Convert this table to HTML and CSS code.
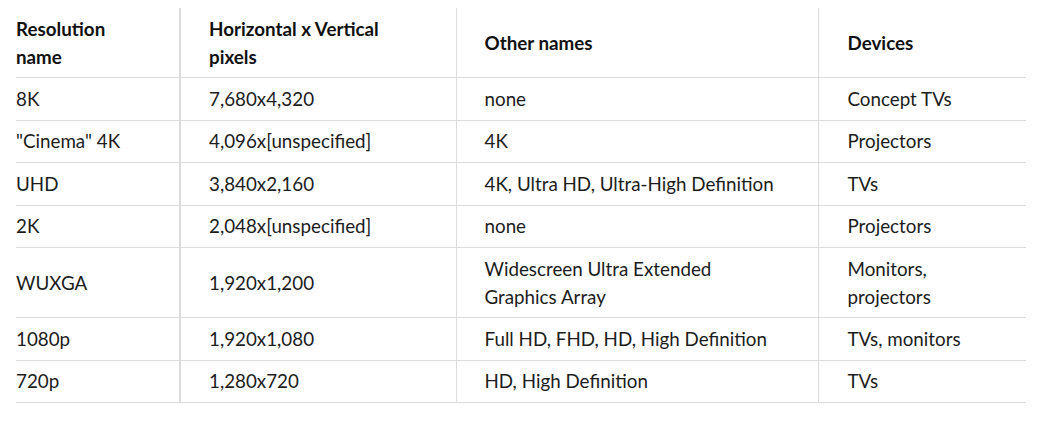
FILE: index.html
```html
<!DOCTYPE html>
<html lang="en">
<head>
<meta charset="utf-8">
<title>Resolutions</title>
<link rel="stylesheet" href="styles.css">
</head>
<body>
<div class="wrap">
<table class="res-table">
  <colgroup>
    <col class="c1"><col class="c2"><col class="c3"><col class="c4">
  </colgroup>
  <thead>
    <tr>
      <th>Resolution name</th>
      <th>Horizontal x Vertical pixels</th>
      <th>Other names</th>
      <th>Devices</th>
    </tr>
  </thead>
  <tbody>
    <tr><td>8K</td><td>7,680x4,320</td><td>none</td><td>Concept TVs</td></tr>
    <tr><td>"Cinema" 4K</td><td>4,096x[unspecified]</td><td>4K</td><td>Projectors</td></tr>
    <tr><td>UHD</td><td>3,840x2,160</td><td>4K, Ultra HD, Ultra-High Definition</td><td>TVs</td></tr>
    <tr><td>2K</td><td>2,048x[unspecified]</td><td>none</td><td>Projectors</td></tr>
    <tr><td>WUXGA</td><td>1,920x1,200</td><td>Widescreen Ultra Extended Graphics Array</td><td>Monitors, projectors</td></tr>
    <tr><td>1080p</td><td>1,920x1,080</td><td>Full HD, FHD, HD, High Definition</td><td>TVs, monitors</td></tr>
    <tr><td>720p</td><td>1,280x720</td><td>HD, High Definition</td><td>TVs</td></tr>
  </tbody>
</table>
</div>
</body>
</html>
```
FILE: styles.css
```css
html, body {
  margin: 0;
  padding: 0;
  background: #ffffff;
}
body {
  font-family: Lato, "Liberation Sans", sans-serif;
  color: #1c1c1c;
}
.wrap {
  padding: 8px 18px 0 16px;
}
.res-table {
  width: 1010px;
  border-collapse: collapse;
  table-layout: fixed;
  font-size: 18.8px;
  line-height: 28px;
}
.c1 { width: 164px; }
.c2 { width: 276px; }
.c3 { width: 362px; }
.c4 { width: 208px; }
.res-table th,
.res-table td {
  text-align: left;
  vertical-align: middle;
  padding: 6.7px 34px 6.7px 28px;
  border-bottom: 1px solid #dcdcdc;
  border-left: 1px solid #dcdcdc;
}
.res-table th {
  font-weight: 700;
  color: #111111;
}
.res-table th:first-child,
.res-table td:first-child {
  padding-left: 0;
  padding-right: 40px;
  border-left: none;
}
.res-table th:nth-child(2),
.res-table td:nth-child(2) {
  border-left: 2px solid #dcdcdc;
  padding-right: 40px;
}
.res-table th:last-child,
.res-table td:last-child {
  padding-left: 29px;
  padding-right: 20px;
}
```
